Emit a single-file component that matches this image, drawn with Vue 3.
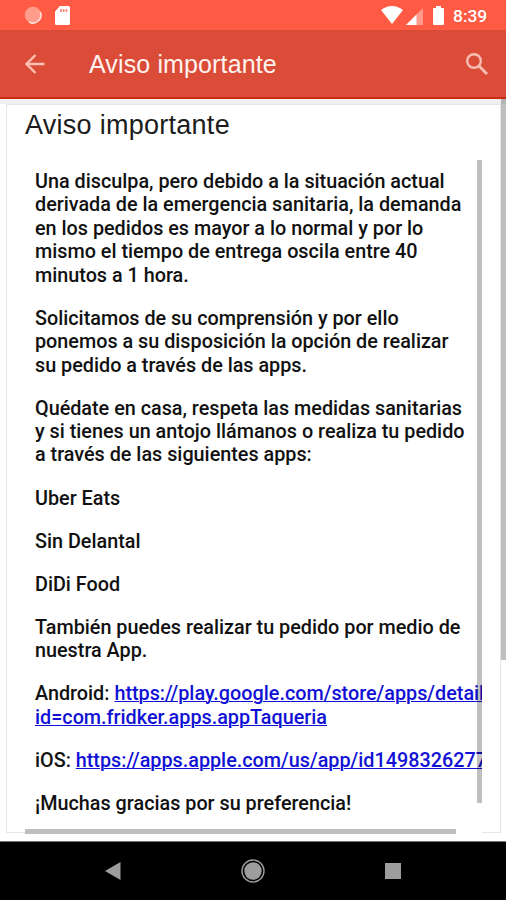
<script setup>
import { ref } from 'vue';

const title = ref("Aviso importante");
const time = ref("8:39");

const paragraphs = ref([
    [
        "Una disculpa, pero debido a la situación actual",
        "derivada de la emergencia sanitaria, la demanda",
        "en los pedidos es mayor a lo normal y por lo",
        "mismo el tiempo de entrega oscila entre 40",
        "minutos a 1 hora.",
    ],
    [
        "Solicitamos de su comprensión y por ello",
        "ponemos a su disposición la opción de realizar",
        "su pedido a través de las apps.",
    ],
    [
        "Quédate en casa, respeta las medidas sanitarias",
        "y si tienes un antojo llámanos o realiza tu pedido",
        "a través de las siguientes apps:",
    ],
    ["Uber Eats"],
    ["Sin Delantal"],
    ["DiDi Food"],
    [
        "También puedes realizar tu pedido por medio de",
        "nuestra App.",
    ],
]);
</script>


<template>
    <div class="screen">
        <div class="status-bar">
            <svg class="spinner" width="18" height="18" viewBox="0 0 18 18">
                <circle cx="9" cy="9" r="8.3" fill="#ff9c8b" />
                <path d="M16.3 6A7.8 7.8 0 0 1 5 15.7" fill="none" stroke="#ffe0da" stroke-width="1.6" />
            </svg>
            <svg class="sd" width="15" height="19" viewBox="0 0 15 19">
                <path d="M5 0h8.5Q15 0 15 1.5v16Q15 19 13.5 19h-12Q0 19 0 17.5V5.500z" fill="#fff" />
                <path d="M6 3v3M8.700 3v3M11.500 3v3" stroke="#ff8a78" stroke-width="1.700" />
            </svg>
            <svg class="wifi" width="22" height="18" viewBox="0 0 22 18">
                <path d="M0 4Q11-4 22 4L11 18z" fill="#fff" />
            </svg>
            <svg class="signal" width="17" height="17" viewBox="0 0 17 17">
                <path d="M0 17L17 0v17z" fill="#ff9b8c" />
                <path d="M0 17L10.500 6.500V17z" fill="#fff" />
            </svg>
            <svg class="battery" width="11" height="19" viewBox="0 0 11 19">
                <path d="M3 0h5v2h2q1 0 1 1v15q0 1-1 1H1q-1 0-1-1V3q0-1 1-1h2z" fill="#fff" />
            </svg>
            <span class="time">{{ time }}</span>
        </div>

        <header class="toolbar">
            <svg class="back" width="20" height="20" viewBox="0 0 20 20">
                <path d="M19.500 10H2M10.500 1L1.500 10l9 9" fill="none" stroke="#ffbfb3" stroke-width="2.400" />
            </svg>
            <h1>{{ title }}</h1>
            <svg class="search" width="22" height="22" viewBox="0 0 22 22">
                <circle cx="8" cy="8" r="6.800" fill="none" stroke="#f8bdb2" stroke-width="2.400" />
                <path d="M13 13l8 8" stroke="#f8bdb2" stroke-width="3" />
            </svg>
        </header>

        <main>
            <section class="card">
                <h2>{{ title }}</h2>
                <div class="message">
                    <p v-for="(lines, i) in paragraphs" :key="i">
                        <span v-for="line in lines" :key="line" class="line">{{ line }}</span>
                    </p>
                    <p>
                        <span class="line">Android: <a href="#">https://play.google.com/store/apps/details?</a></span>
                        <span class="line"><a href="#">id=com.fridker.apps.appTaqueria</a></span>
                    </p>
                    <p>
                        <span class="line">iOS: <a href="#">https://apps.apple.com/us/app/id1498326277</a></span>
                    </p>
                    <p><span class="line">¡Muchas gracias por su preferencia!</span></p>
                    <i class="bar-v"></i>
                    <div class="track-h"><i class="bar-h"></i></div>
                </div>
            </section>
            <i class="page-bar"></i>
        </main>

        <nav>
            <svg width="16" height="18" viewBox="0 0 16 18">
                <path d="M0 9L15.500 0v18z" fill="#9d9d9d" />
            </svg>
            <svg width="24" height="24" viewBox="0 0 24 24">
                <circle cx="12" cy="12" r="11" fill="none" stroke="#9d9d9d" stroke-width="1.400" />
                <circle cx="12" cy="12" r="8.700" fill="#9d9d9d" />
            </svg>
            <svg width="16" height="16" viewBox="0 0 16 16">
                <rect width="16" height="16" fill="#9d9d9d" />
            </svg>
        </nav>
    </div>
</template>


<style>
body {
    margin: 0;
    background: #fff;
}
</style>

<style scoped>
.screen {
    width: 506px;
    height: 900px;
    display: flex;
    flex-direction: column;
    overflow: hidden;
    font-family: Roboto, "Liberation Sans", sans-serif;
}

svg {
    display: block;
    flex: none;
}

.status-bar {
    box-sizing: border-box;
    height: 30px;
    flex: none;
    display: flex;
    align-items: center;
    padding: 0 19px 0 24px;
    background: #ff5a43;
}

.sd {
    margin-left: 13px;
}

.wifi {
    margin-left: auto;
}

.signal {
    margin-left: 3px;
    margin-top: 2px;
}

.battery {
    margin-left: 10px;
}

.time {
    width: 34px;
    margin-left: 9px;
    margin-top: 1px;
    color: #fff;
    font-size: 17.4px;
    font-weight: 500;
    white-space: nowrap;
}

.toolbar {
    box-sizing: border-box;
    height: 69px;
    flex: none;
    display: flex;
    align-items: center;
    padding: 0 18px 0 25px;
    background: #da4c37;
    border-bottom: 2px solid #c92c12;
}

h1,
h2 {
    margin: 0;
    font-family: "Liberation Sans", Arial, sans-serif;
    font-weight: 400;
    white-space: nowrap;
}

h1 {
    flex: 1;
    margin-left: 44px;
    color: #fff3f0;
    font-size: 25px;
    line-height: 30px;
    letter-spacing: 0.13px;
}

main {
    position: relative;
    box-sizing: border-box;
    height: 742px;
    flex: none;
    padding: 0 5px 0 6px;
    background: #fff;
    border-top: 5px solid #efefef;
}

.card {
    box-sizing: border-box;
    height: 729px;
    padding: 0 18px;
    border: 1px solid #e6e6e6;
}

h2 {
    height: 55px;
    color: #1c1c1c;
    font-size: 27px;
    line-height: 41px;
    letter-spacing: 0.27px;
}

.message {
    position: relative;
    box-sizing: border-box;
    width: 457px;
    height: 673px;
    padding: 10px 0 0 10px;
    overflow: hidden;
    color: #111;
    font-size: 19.8px;
    font-weight: 500;
    line-height: 23.4px;
}

p {
    margin: 0 0 19.7px;
}

.line {
    display: block;
    white-space: nowrap;
}

a {
    color: #1111d5;
    text-decoration: underline;
    text-decoration-thickness: 1px;
}

.bar-v,
.bar-h,
.page-bar {
    background: #000;
    opacity: 0.25;
}

.bar-v {
    position: absolute;
    top: 0;
    right: 0;
    width: 5px;
    height: 643px;
}

/* covers the card border under the message, up to the corner */
.track-h {
    position: absolute;
    left: 0;
    bottom: 0;
    width: 457px;
    height: 5px;
    background: #fff;
}

.bar-h {
    display: block;
    width: 431px;
    height: 5px;
}

.message {
    height: 674px;
}

.page-bar {
    position: absolute;
    top: -5px;
    right: 0;
    width: 5px;
    height: 561px;
}

nav {
    box-sizing: border-box;
    height: 59px;
    flex: none;
    display: flex;
    align-items: center;
    justify-content: space-between;
    padding: 0 105px;
    background: #000;
    border-top: 1px solid #777;
}
</style>
